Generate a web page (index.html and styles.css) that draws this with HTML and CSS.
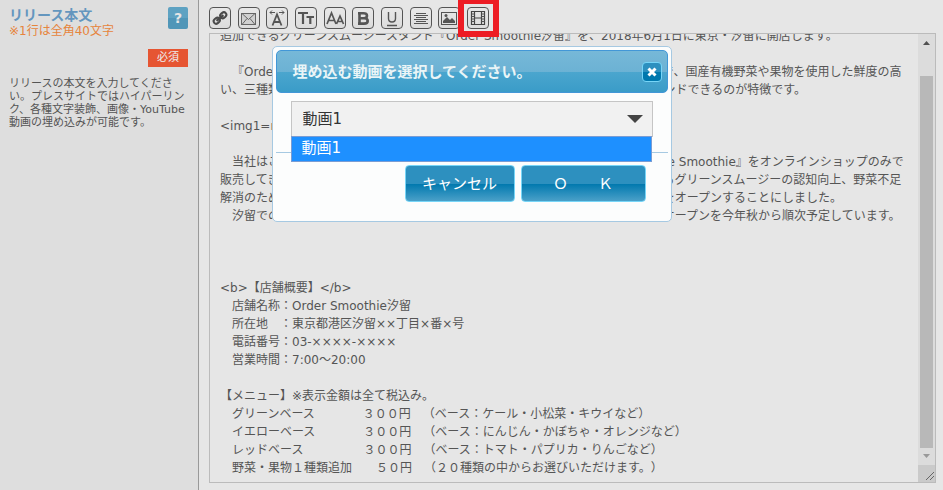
FILE: index.html
```html
<!DOCTYPE html>
<html lang="ja">
<head>
<meta charset="utf-8">
<title>リリース本文</title>
<link rel="stylesheet" href="styles.css">
</head>
<body>
<div class="form-row">
  <aside class="guide">
    <div class="guide-head">
      <div>
        <h1 class="guide-title"><label for="body">リリース本文</label></h1>
        <p class="guide-note">※1行は全角40文字</p>
      </div>
      <button type="button" class="help">?</button>
    </div>
    <span class="required">必須</span>
    <p class="guide-text">リリースの本文を入力してください。プレスサイトではハイパーリンク、各種文字装飾、画像・YouTube動画の埋め込みが可能です。</p>
  </aside>
  <main class="editor">
    <div class="toolbar">
      <button type="button" class="tool" aria-label="リンク"><svg viewBox="0 0 20 20"><g transform="rotate(-40 10 10)" fill="none" stroke="#4a4a4a" stroke-width="2"><rect x="2.500" y="7.500" width="6.500" height="5" rx="2.500"/><rect x="11" y="7.500" width="6.500" height="5" rx="2.500"/><path d="M5.500 10h9" stroke-width="2.400"/></g></svg></button>
      <button type="button" class="tool" aria-label="メール"><svg viewBox="0 0 20 20"><g fill="none" stroke="#666" stroke-width="1"><rect x="2.500" y="5.500" width="14" height="11" fill="#d0d0d0"/><path d="M3 5.500l6.500 6 6.500-6M3 16.500l5-6M16 16.500l-5-6"/></g></svg></button>
      <button type="button" class="tool" aria-label="文字間隔"><svg viewBox="0 0 20 20"><path d="M3 4.500h5M12 4.500h5M5 2.500l-2 2 2 2M15 2.500l2 2-2 2" fill="none" stroke="#555"/><path d="M5.500 17.500L10 6.500l4.500 11M7 14h6" fill="none" stroke="#555" stroke-width="1.800"/></svg></button>
      <button type="button" class="tool" aria-label="文字を大きく"><svg viewBox="0 0 20 20"><path d="M2 5h10M7 5v11M10.500 9h7.500M14.300 9v7" fill="none" stroke="#555" stroke-width="2.200"/></svg></button>
      <button type="button" class="tool" aria-label="文字を小さく"><svg viewBox="0 0 20 20"><path d="M2 16L6.500 5 11 16M3.500 12.500h6M11.500 16l3.500-8 3.500 8M12.500 13.500h5" fill="none" stroke="#555" stroke-width="1.700"/></svg></button>
      <button type="button" class="tool" aria-label="太字"><svg viewBox="0 0 20 20"><path d="M6.500 5.200v10.300M5 5.200h5.500q3.500 0 3.500 2.500t-3.500 2.500H7h4q3.700 0 3.700 2.700t-3.700 2.700H5" fill="none" stroke="#555" stroke-width="2.600"/></svg></button>
      <button type="button" class="tool" aria-label="下線"><svg viewBox="0 0 20 20"><path d="M6.500 4v6.500q0 3.500 3.500 3.500t3.500-3.500V4M5 17.500h10" fill="none" stroke="#555" stroke-width="1.400"/></svg></button>
      <button type="button" class="tool" aria-label="中央揃え"><svg viewBox="0 0 20 20"><path d="M5 5.500h10M3 7.500h14M5 9.500h10M3 11.500h14M5 13.500h10M3 15.500h14" stroke="#555"/></svg></button>
      <button type="button" class="tool" aria-label="画像"><svg viewBox="0 0 20 20"><rect x="2.500" y="4.500" width="15" height="12" fill="none" stroke="#555"/><path d="M4 15v-2l4-4 3 3 2-2 3 3v2z" fill="#555"/><circle cx="7" cy="7.500" r="1.500" fill="#555"/></svg></button>
      <button type="button" class="tool tool-active" aria-label="動画"><svg viewBox="0 0 20 20"><path d="M3.500 3.500h13v13h-13zM6.500 3.500v13M13.500 3.500v13M6.500 10h7" fill="none" stroke="#444" stroke-width="1.200"/><path d="M3.500 6h3M3.500 8.500h3M3.500 11h3M3.500 13.500h3M13.500 6h3M13.500 8.500h3M13.500 11h3M13.500 13.500h3" stroke="#555"/></svg></button>
    </div>
    <div class="field">
      <textarea id="body" class="body-text" wrap="off">追加できるグリーンスムージースタンド『Order Smoothie汐留』を、2018年6月1日に東京・汐留に開店します。

　『Order Smoothie汐留』は、水と野菜と果物だけで作るグリーンスムージー店で、国産有機野菜や果物を使用した鮮度の高
い、三種類のベースに二十種類の野菜や果物を自由に組み合わせて自分好みにブレンドできるのが特徴です。

&lt;img1=right&gt;

　当社はこれまで野菜と果物の恵みをまるごと使うグリーンスムージー『Vegetable Smoothie』をオンラインショップのみで
販売してきましたが、お客様からのご要望を受けて、店舗での提供を通じたさらなるグリーンスムージーの認知向上、野菜不足
解消のために、新鮮な野菜と果物を気軽に楽しめるスムージースタンドの第一号店をオープンすることにしました。
　汐留での開店に続いて、都内を中心とした主要な駅やオフィス街に複数新店舗のオープンを今年秋から順次予定しています。



&lt;b&gt;【店舗概要】&lt;/b&gt;
　店舗名称：Order Smoothie汐留
　所在地　：東京都港区汐留××丁目×番×号
　電話番号：03-××××-××××
　営業時間：7:00～20:00

【メニュー】※表示金額は全て税込み。
　グリーンベース　　　　３００円　（ベース：ケール・小松菜・キウイなど）
　イエローベース　　　　３００円　（ベース：にんじん・かぼちゃ・オレンジなど）
　レッドベース　　　　　３００円　（ベース：トマト・パプリカ・りんごなど）
　野菜・果物１種類追加　　５０円　（２０種類の中からお選びいただけます。）</textarea>
      <div class="scrollbar" aria-hidden="true">
        <svg class="arrow" viewBox="0 0 17 17"><path d="M5 11l3.500-4 3.500 4z" fill="#505050"/></svg>
        <div class="track"><div class="thumb"></div></div>
        <svg class="arrow" viewBox="0 0 17 17"><path d="M5 6l3.500 4L12 6z" fill="#999"/></svg>
        <svg class="grip" viewBox="0 0 17 17"><path d="M8 15l8-8M12 15l4-4" stroke="#666" fill="none"/></svg>
      </div>
    </div>
  </main>
</div>

<section class="dialog" role="dialog" aria-labelledby="dialog-title">
  <header class="dialog-head">
    <h2 id="dialog-title" class="dialog-title"><label for="movie">埋め込む動画を選択してください。</label></h2>
    <button type="button" class="close" aria-label="閉じる"><svg viewBox="0 0 16 16"><path d="M4.500 4.500l7 7M11.500 4.500l-7 7" stroke="#fff" stroke-width="3"/></svg></button>
  </header>
  <div class="dialog-body">
    <div class="picker">
      <select id="movie" class="picker-select"><option>動画1</option></select>
      <svg class="caret" viewBox="0 0 16 8"><path d="M0 0h16L8 8z" fill="#444"/></svg>
      <ul class="picker-list"><li>動画1</li></ul>
    </div>
  </div>
  <footer class="dialog-foot">
    <button type="button" class="btn btn-cancel">キャンセル</button>
    <button type="button" class="btn btn-ok">Ｏ　　Ｋ</button>
  </footer>
</section>
<script src="script.js"></script>
</body>
</html>
```
FILE: script.js
```js
// Open the text part of a line down.
document.getElementById('body').scrollTop = 7;
```
FILE: styles.css
```css
* { box-sizing: border-box; }

body {
  margin: 0;
  background: #e6e6e6;
  color: #555;
  font: 12px/18px "DejaVu Sans", "Noto Sans CJK JP", sans-serif;
  text-spacing-trim: space-all;
}

h1, h2, p, ul { margin: 0; padding: 0; }
button, select, textarea { font: inherit; color: inherit; margin: 0; text-spacing-trim: inherit; }
svg { display: block; }

.form-row { display: flex; min-height: 100vh; }

.guide {
  flex: 0 0 199px;
  padding: 7px 10px 0 9px;
  background: #dedede;
  border-right: 1px solid #999;
}
.guide-head { display: flex; justify-content: space-between; align-items: flex-start; }
.guide-title { font-size: 14px; line-height: 16px; color: #6496be; }
.guide-note { font-size: 12px; line-height: 16px; color: #e6843c; }
.help {
  width: 20px;
  height: 22px;
  padding: 0;
  border: 0;
  border-radius: 2px;
  background: linear-gradient(#5ea2c2 50%, #5096b8 50%);
  color: #e6e6e6;
  font-size: 14px;
  font-weight: bold;
}
.required {
  display: block;
  width: 40px;
  margin: 10px 0 0 auto;
  background: #e65532;
  color: #eee;
  font-size: 11px;
  text-align: center;
}
.guide-text { margin-top: 10px; font-size: 11px; line-height: 13px; }

.editor {
  flex: 1;
  display: flex;
  flex-direction: column;
  min-width: 0;
  padding: 7px 7px 7px 10px;
}
.toolbar { display: flex; justify-content: space-between; width: 280px; margin-bottom: 4px; }
.tool {
  position: relative;
  width: 22px;
  height: 22px;
  padding: 0;
  border: 1px solid #555;
  border-radius: 4px;
  background: linear-gradient(#e8e8e8, #dcdcdc);
}
.tool-active::after {
  content: "";
  position: absolute;
  inset: -10px -11px -9px -10px;
  border: 6px solid #ed1c24;
}

.field { flex: 1; display: flex; border: 1px solid #bbb; }
.body-text {
  flex: 1;
  min-width: 0;
  padding: 0 0 12px 10px;
  border: 0;
  outline: 0;
  resize: none;
  overflow: hidden;
  background: transparent;
  white-space: pre;
}
.scrollbar { flex: 0 0 17px; display: flex; flex-direction: column; background: #dcdcdc; }
.arrow, .grip { flex: none; width: 17px; height: 17px; }
.grip { background: #cacaca; }
.track { flex: 1; padding: 25px 2px 0; }
.thumb { height: 100%; background: #b8b8b8; }

.dialog {
  position: absolute;
  top: 46px;
  left: 0;
  right: 0;
  width: 400px;
  margin: 0 auto;
  padding: 3px;
  border: 1px solid #a6c9e2;
  border-radius: 5px;
  background: #fcfdfd;
}
.dialog-head {
  display: flex;
  align-items: center;
  justify-content: space-between;
  height: 43px;
  padding: 0 5px 0 16px;
  border: 1px solid #4297d7;
  border-radius: 5px;
  background: linear-gradient(#76b8d8, #6cb2d4 50%, #4ba6ce 51%, #3a9cc8);
}
.dialog-title { color: #eaf5f7; font-size: 15px; line-height: 20px; }
.close {
  width: 20px;
  height: 20px;
  padding: 1px;
  border: 1px solid #77d5f7;
  border-radius: 4px;
  background: linear-gradient(#2d90bf 50%, #0078ae 50%);
}
.dialog-body { padding: 8px 15px 15px; border-bottom: 1px solid #a6c9e2; }
.picker { position: relative; }
.picker-select {
  display: block;
  appearance: none;
  width: 100%;
  height: 36px;
  padding: 0 11px;
  border: 1px solid #c5c5c5;
  border-radius: 0;
  background: #f1f1f1;
  color: #333;
  font-size: 15px;
}
.caret { position: absolute; top: 14px; right: 10px; width: 16px; height: 8px; }
.picker-list {
  position: absolute;
  top: 35px;
  left: 0;
  right: 1px;
  padding: 0 10px 2px;
  border: 1px solid #7a9cd3;
  background: #1e90ff;
  color: #fff;
  font-size: 15px;
  line-height: 22px;
  list-style: none;
}
.dialog-foot { display: flex; justify-content: flex-end; gap: 6px; padding: 12px 22px 16px; }
.btn {
  height: 37px;
  padding: 0;
  border: 1px solid #77d5f7;
  border-radius: 4px;
  background: linear-gradient(#2d90bf 50%, #0078ae 51%, #4aa0c8);
  color: #fff;
  font-size: 15px;
}
.btn-cancel { width: 110px; }
.btn-ok { width: 125px; }
```
